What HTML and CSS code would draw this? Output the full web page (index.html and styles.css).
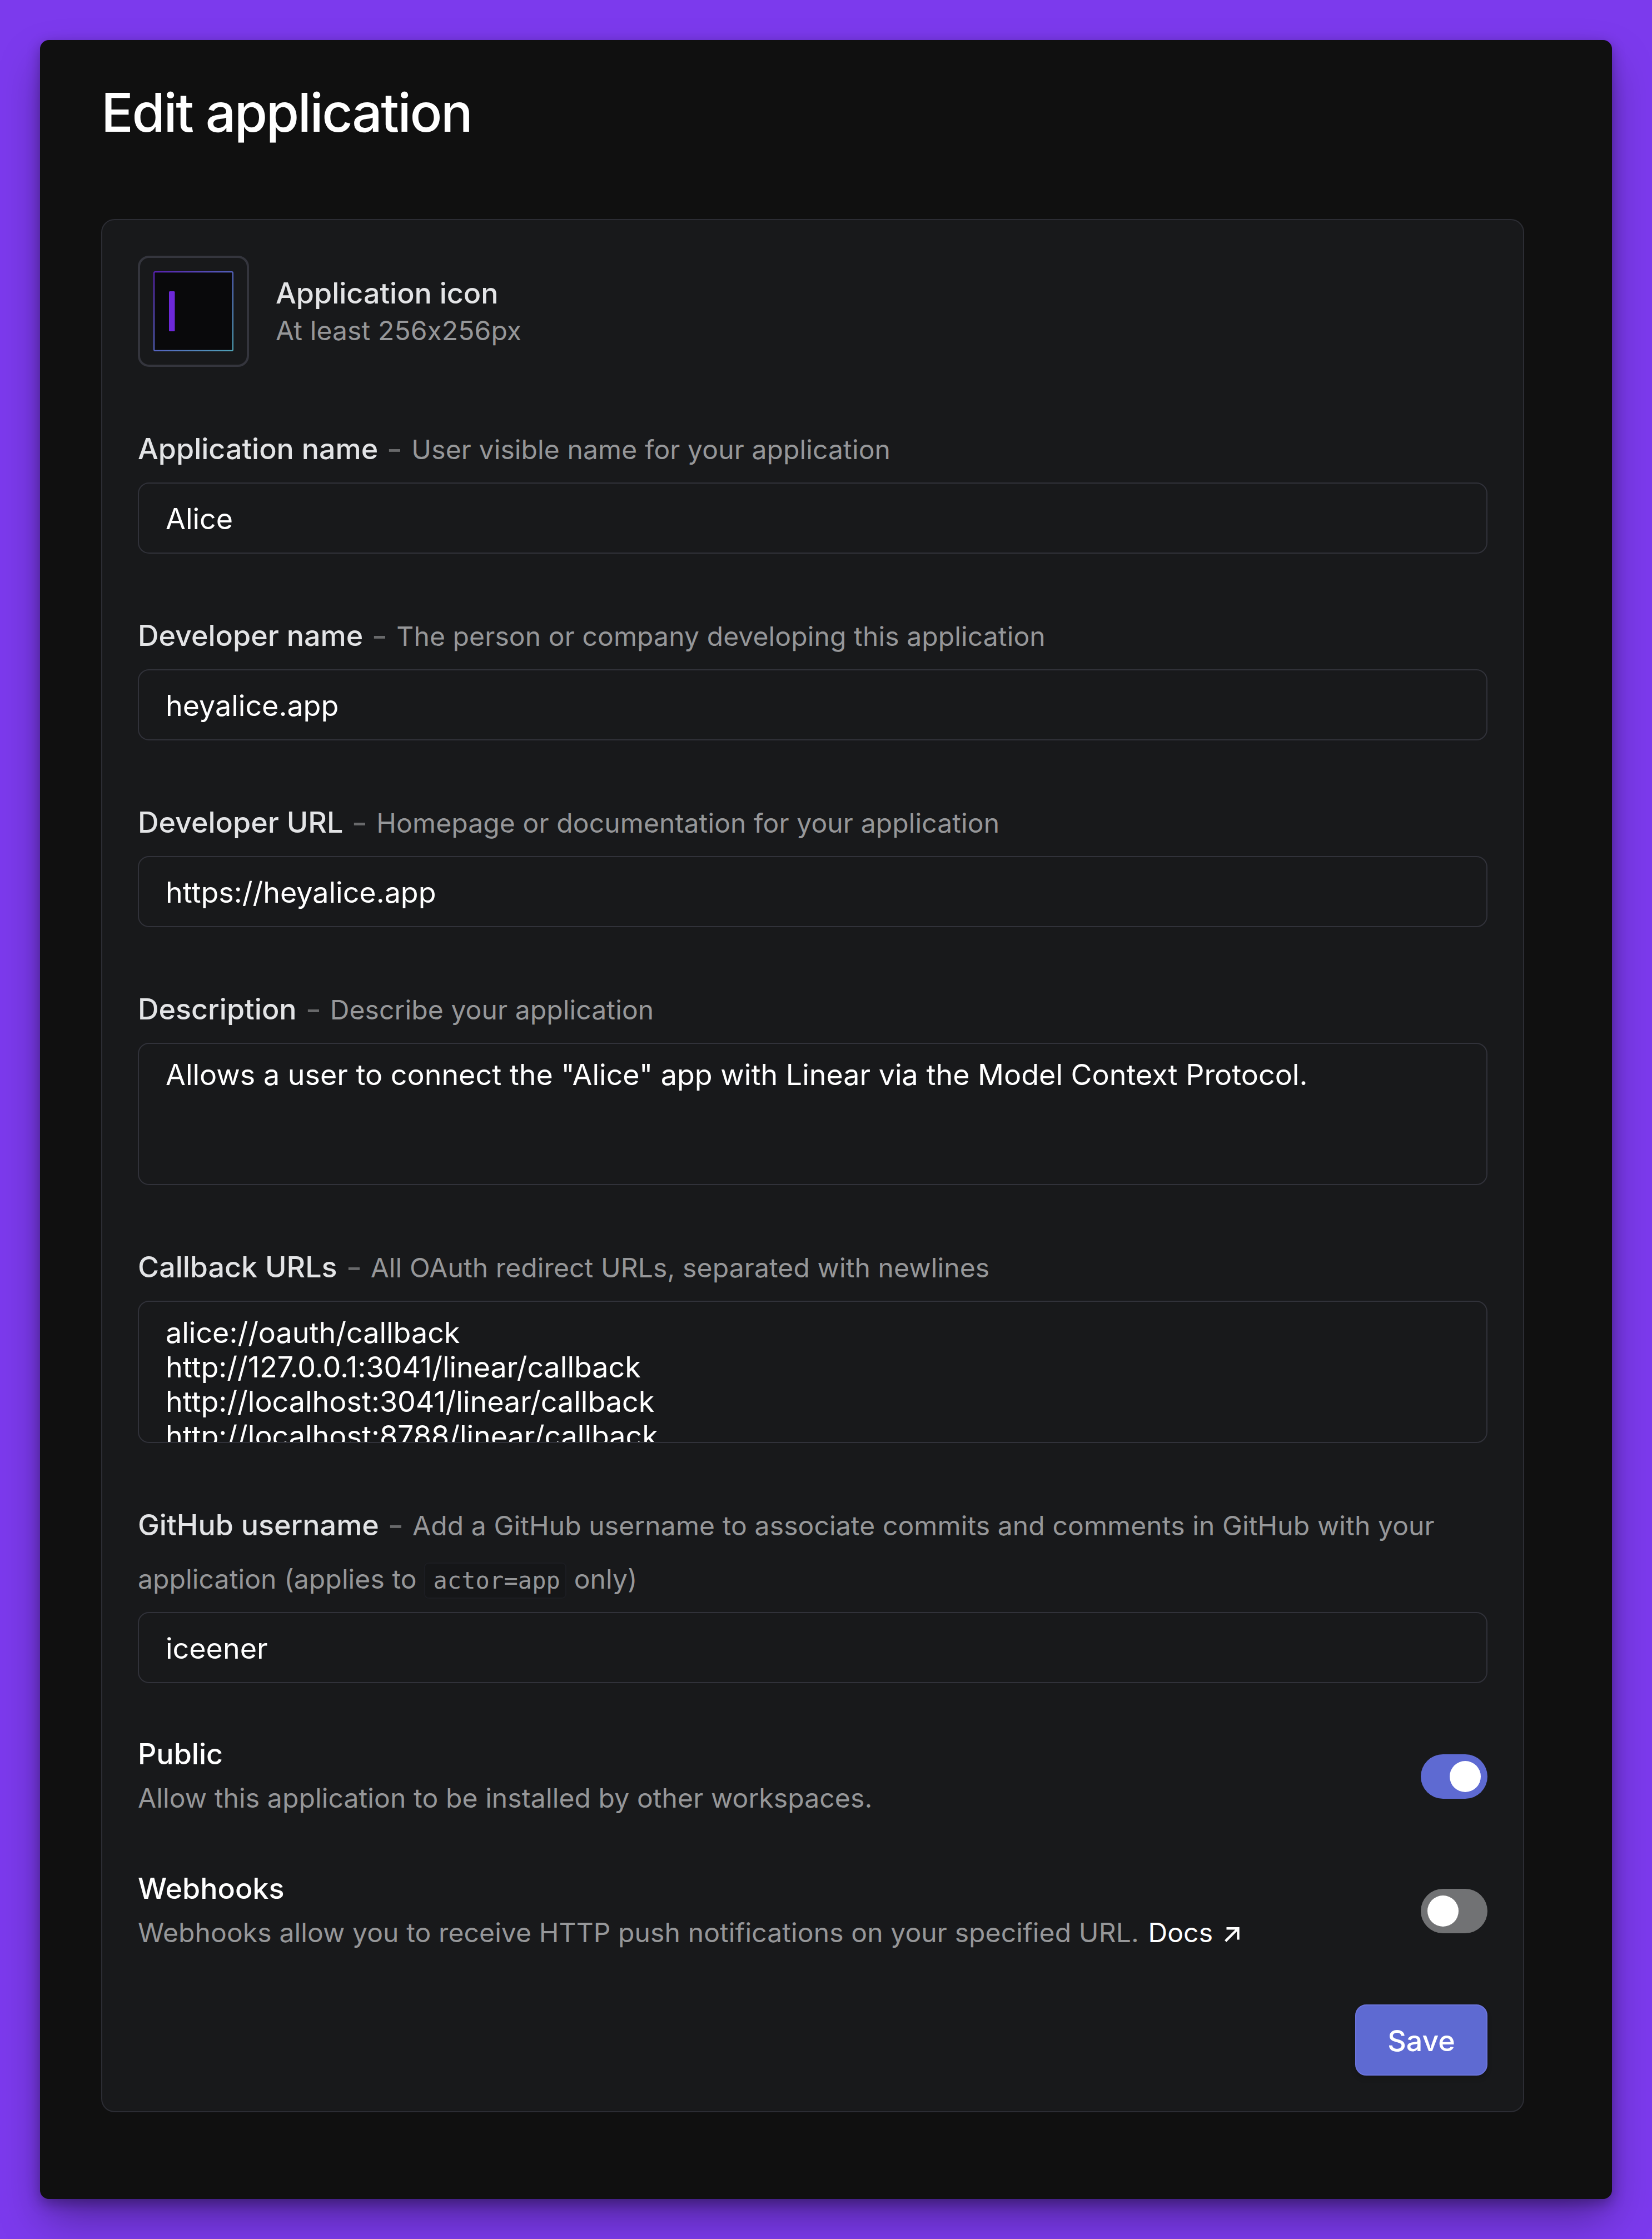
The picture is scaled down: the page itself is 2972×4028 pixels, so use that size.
FILE: index.html
```html
<!DOCTYPE html>
<html lang="en">
<head>
<meta charset="utf-8">
<title>Edit application</title>
<link rel="stylesheet" href="styles.css">
</head>
<body>
<main class="window">
  <h1 class="title">Edit application</h1>
  <form class="card">
    <div class="icon-row">
      <div class="icon-box">
        <svg width="144" height="144" viewBox="0 0 144 144">
          <defs>
            <linearGradient id="edge" gradientUnits="userSpaceOnUse" x1="0" y1="0" x2="144" y2="144">
              <stop offset="0" stop-color="#5b21b6"/>
              <stop offset=".5" stop-color="#5563c0"/>
              <stop offset="1" stop-color="#4fa3b5"/>
            </linearGradient>
          </defs>
          <rect x="1.100" y="1.100" width="141.800" height="141.800" rx="2" fill="#09090b" stroke="url(#edge)" stroke-width="2.200"/>
          <rect x="28" y="36" width="10.5" height="72" rx="1.5" fill="#6d28d9"/>
        </svg>
      </div>
      <div class="icon-text">
        <div class="label">Application icon</div>
        <div class="hint">At least 256x256px</div>
      </div>
    </div>

    <div class="field">
      <div class="caption"><span class="label">Application name</span><span class="dash">-</span><span class="hint">User visible name for your application</span></div>
      <div class="input">Alice</div>
    </div>
    <div class="field">
      <div class="caption"><span class="label">Developer name</span><span class="dash">-</span><span class="hint">The person or company developing this application</span></div>
      <div class="input">heyalice.app</div>
    </div>
    <div class="field">
      <div class="caption"><span class="label">Developer URL</span><span class="dash">-</span><span class="hint">Homepage or documentation for your application</span></div>
      <div class="input">https://heyalice.app</div>
    </div>
    <div class="field">
      <div class="caption"><span class="label">Description</span><span class="dash">-</span><span class="hint">Describe your application</span></div>
      <div class="input area">Allows a user to connect the "Alice" app with Linear via the Model Context Protocol.</div>
    </div>
    <div class="field">
      <div class="caption"><span class="label">Callback URLs</span><span class="dash">-</span><span class="hint">All OAuth redirect URLs, separated with newlines</span></div>
      <div class="input area">alice://oauth/callback
http://127.0.0.1:3041/linear/callback
http://localhost:3041/linear/callback
http://localhost:8788/linear/callback</div>
    </div>
    <div class="field">
      <div class="caption"><span class="label">GitHub username</span><span class="dash">-</span><span class="hint">Add a GitHub username to associate commits and comments in GitHub with your<br>application (applies to <code class="code">actor=app</code> only)</span></div>
      <div class="input">iceener</div>
    </div>

    <div class="options">
      <div class="option">
        <div class="option-text">
          <div class="label">Public</div>
          <div class="hint">Allow this application to be installed by other workspaces.</div>
        </div>
        <div class="toggle on"><span class="knob"></span></div>
      </div>
      <div class="option">
        <div class="option-text">
          <div class="label">Webhooks</div>
          <div class="hint">Webhooks allow you to receive HTTP push notifications on your specified URL. <a class="link">Docs<svg class="arrow" width="27" height="27" viewBox="0 0 27 27"><path d="M3.500 2.300H24.500V22.500M24.500 2.300L1.700 25.100" fill="none" stroke="currentColor" stroke-width="4.400"/></svg></a></div>
        </div>
        <div class="toggle"><span class="knob"></span></div>
      </div>
    </div>

    <div class="actions"><button type="button" class="save">Save</button></div>
  </form>
</main>
</body>
</html>
```

FILE: styles.css
```css
* { box-sizing: border-box; }
body {
  margin: 0;
  padding: 72px;
  background: #7c3aed;
  font-family: Inter, sans-serif;
  font-feature-settings: "calt" 0;
  color: #fff;
}
.window {
  height: 3884px;
  padding: 72px 158px 0 110px;
  border-radius: 16px;
  background: #101010;
  box-shadow: 0 40px 80px -8px rgba(0, 0, 0, .35), 0 8px 24px rgba(0, 0, 0, .3);
}
.title {
  margin: 0 0 134px;
  font-size: 96px;
  line-height: 116px;
  font-weight: 500;
  letter-spacing: -2.4px;
}
.card {
  height: 3406px;
  padding: 64px;
  border: 2px solid #2c2d34;
  border-radius: 24px;
  background: #18191b;
  display: flex;
  flex-direction: column;
}
.label { font-size: 52px; font-weight: 500; color: #e3e4e6; }
.hint { font-size: 48px; letter-spacing: .115px; color: #969799; }
.icon-row {
  display: flex;
  align-items: center;
  gap: 48px;
  height: 200px;
  margin-bottom: 96px;
}
.icon-box {
  display: flex;
  align-items: center;
  justify-content: center;
  width: 200px;
  height: 200px;
  border: 4px solid #34353d;
  border-radius: 20px;
}
.icon-text { padding-top: 1px; line-height: 67px; }
.field { margin-bottom: 96px; }
.caption {
  padding-top: 4px;
  margin-bottom: 12px;
  font-size: 52px;
  line-height: 96px;
  white-space: nowrap;
}
.caption span { line-height: 0; }
.caption .hint { line-height: 90px; }
.dash {
  display: inline-block;
  margin: 0 18px;
  transform: scaleX(1.2);
  font-weight: 500;
  color: #68696b;
}
.code {
  padding: 6px 9px 6px 14px;
  border: 2px solid #1c1d22;
  border-radius: 8px;
  background: #151618;
  font-family: "DejaVu Sans Mono", monospace;
  font-size: 42px;
  line-height: 0;
}
.input {
  height: 128px;
  padding: 0 48px;
  border: 2px solid #31323a;
  border-radius: 20px;
  font-size: 52px;
  line-height: 127px;
  white-space: pre;
  overflow: hidden;
}
.area {
  height: 256px;
  padding-top: 25px;
  line-height: 62px;
}
.options {
  display: flex;
  flex-direction: column;
  gap: 98px;
  margin-bottom: 96px;
}
.option {
  display: flex;
  justify-content: space-between;
  align-items: center;
  height: 144px;
}
.option-text { margin-bottom: 2px; line-height: 79px; }
.option .label { color: #fff; }
.toggle {
  width: 120px;
  height: 80px;
  padding: 12px;
  border-radius: 40px;
  background: #717274;
  display: flex;
}
.toggle.on { background: #5e6ad2; justify-content: flex-end; }
.knob { width: 56px; height: 56px; border-radius: 50%; background: #fff; }
.link { margin-left: 3px; color: #fff; }
.arrow { margin-left: 21px; }
.actions { display: flex; justify-content: flex-end; }
.save {
  width: 238px;
  height: 128px;
  padding: 2px 0 0;
  border: 2px solid #6b74dc;
  border-radius: 20px;
  background: #5e6ad2;
  box-shadow: 0 6px 8px rgba(0, 0, 0, .15);
  color: #fff;
  font-family: inherit;
  font-size: 52px;
  font-weight: 500;
}
```
